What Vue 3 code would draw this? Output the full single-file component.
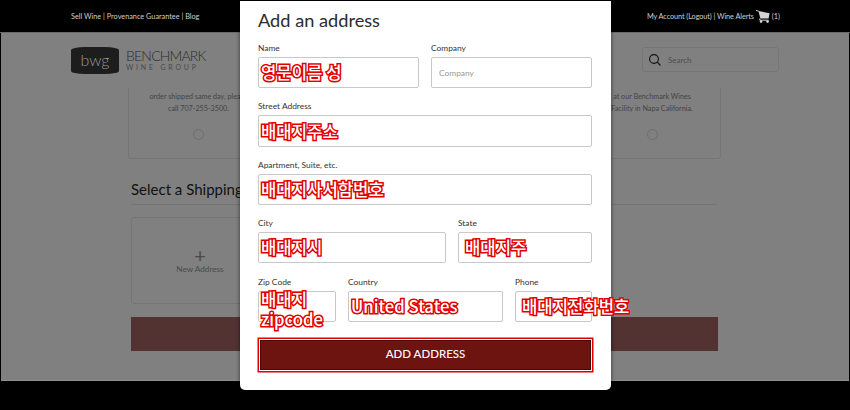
<template>
  <div class="page">
    <header class="topbar">
      <div class="top-left">Sell Wine | Provenance Guarantee | Blog</div>
      <div class="top-right">
        <span class="account">My Account (Logout) | Wine Alerts</span>
        <svg class="cart" width="14" height="13" viewBox="0 0 14 13">
          <path d="M0 .5l2.6.6" stroke="#d4d4d4" fill="none" />
          <path d="M2.4 1L13.6 3.2 12.6 8.6H4.4Z" fill="#d4d4d4" />
          <path d="M3.8 8.6v1.6h8.8" stroke="#d4d4d4" fill="none" />
          <circle cx="5" cy="11.6" r="1.3" fill="#d4d4d4" />
          <circle cx="11.6" cy="11.6" r="1.3" fill="#d4d4d4" />
        </svg>
        <span>(1)</span>
      </div>
    </header>

    <main class="backdrop">
      <div class="brand-row">
        <div class="logo">
          <div class="badge">bwg</div>
          <div class="wordmark">
            <div class="bench">BENCHMARK</div>
            <div class="wine">WINE GROUP</div>
          </div>
        </div>
        <div class="search">
          <svg width="12" height="12" viewBox="0 0 12 12" fill="none" stroke="#111" stroke-width="1.1">
            <circle cx="5" cy="5" r="4.4" />
            <path d="M8.2 8.2l3.3 3.3" />
          </svg>
          <span>Search</span>
        </div>
      </div>

      <section class="pickup-row">
        <div class="pickup left">
          <p>order shipped same day, please</p>
          <p>call 707-255-3500.</p>
          <i class="radio"></i>
        </div>
        <div class="pickup right">
          <p>at our Benchmark Wines</p>
          <p>Facility in Napa California.</p>
          <i class="radio"></i>
        </div>
      </section>

      <h2 class="ship-title">Select a Shipping Address</h2>
      <div class="new-card">
        <div class="plus">+</div>
        <div class="new-label">New Address</div>
      </div>
      <div class="continue"></div>
    </main>
    <div class="bottom"></div>

    <form class="modal" @submit.prevent>
      <h1>Add an address</h1>
      <div v-for="(row, i) in rows" :key="i" class="row" :style="{ gridTemplateColumns: row.cols }">
        <div v-for="field in row.fields" :key="field.label" class="field">
          <label>{{ field.label }}</label>
          <div class="box" :class="{ tall: row.tall }">
            <span v-if="field.value" class="marked" :class="field.cls">{{ field.value }}</span>
            <span v-else class="placeholder">{{ field.label }}</span>
          </div>
        </div>
      </div>
      <button class="submit" type="submit">ADD ADDRESS</button>
    </form>
  </div>
</template>

<script setup>
const rows = [
  {
    cols: '161px 161px',
    fields: [
      { label: 'Name', value: '영문이름 성' },
      { label: 'Company', value: '' }
    ]
  },
  { cols: '334px', tall: true, fields: [{ label: 'Street Address', value: '배대지주소' }] },
  { cols: '334px', fields: [{ label: 'Apartment, Suite, etc.', value: '배대지사서함번호' }] },
  {
    cols: '188px 134px',
    fields: [
      { label: 'City', value: '배대지시' },
      { label: 'State', value: '배대지주', cls: 'inset' }
    ]
  },
  {
    cols: '78px 155px 77px',
    fields: [
      { label: 'Zip Code', value: '배대지 zipcode', cls: 'wrap' },
      { label: 'Country', value: 'United States' },
      { label: 'Phone', value: '배대지전화번호', cls: 'over' }
    ]
  }
]
</script>

<style>
html,
body {
  margin: 0;
  background: #000;
}
</style>

<style scoped>
.page {
  position: relative;
  width: 850px;
  height: 410px;
  overflow: hidden;
  background: #000;
  font-family: Lato, "Noto Sans CJK KR", sans-serif;
}
.topbar {
  height: 33px;
  box-sizing: border-box;
  display: flex;
  justify-content: space-between;
  align-items: center;
  padding: 0 70px 0 71px;
  color: #cfcfcf;
  font-size: 7.3px;
  border-bottom: 1px solid #6a6a6a;
}
.top-right {
  display: flex;
  align-items: center;
  gap: 2px;
}
.account {
  letter-spacing: -0.08px;
}
.backdrop {
  height: 348px;
  margin: 0 1px;
  background: #808080;
  box-sizing: border-box;
  padding-top: 14px;
  border-bottom: 1px solid #8e8e8e;
}
.bottom {
  height: 29px;
}
.brand-row {
  display: flex;
  justify-content: space-between;
  padding: 0 70px;
  height: 41px;
}
.logo {
  display: flex;
  align-items: center;
  gap: 7px;
  height: 27px;
}
.badge {
  width: 48px;
  height: 27px;
  border-radius: 14px / 3px;
  background: #1d1d1d;
  color: #9a9a9a;
  font-size: 16px;
  font-weight: 300;
  text-align: center;
  line-height: 25px;
}
.bench {
  color: #2c2c2c;
  font-size: 14px;
  font-weight: 300;
  letter-spacing: -0.8px;
  line-height: 14px;
}
.wine {
  color: #4a4a4a;
  font-size: 7px;
  line-height: 9px;
  letter-spacing: 2.8px;
  white-space: nowrap;
}
.search {
  width: 137px;
  height: 25px;
  box-sizing: border-box;
  display: flex;
  align-items: center;
  gap: 7px;
  padding-left: 6px;
  border: 1px solid #767676;
  border-radius: 3px;
  color: #4d4d4d;
  font-size: 8px;
}
.pickup-row {
  display: flex;
  justify-content: space-between;
  margin: 0 128px 0 127px;
  height: 71px;
  box-sizing: border-box;
  border: 1px solid #757575;
  border-top: 0;
  border-radius: 0 0 3px 3px;
  color: #444;
  font-size: 7.2px;
  line-height: 12px;
}
.pickup {
  width: 139px;
  text-align: center;
  padding-top: 3px;
}
.pickup.right {
  width: 136px;
}
.pickup p {
  margin: 0;
  white-space: nowrap;
}
.radio {
  display: block;
  width: 9px;
  height: 9px;
  margin: 14px auto 0;
  border: 1px solid #6e6e6e;
  border-radius: 50%;
}
.ship-title {
  margin: 23px 0 0 130px;
  width: 586px;
  height: 23px;
  box-sizing: border-box;
  border-bottom: 1px solid #757575;
  color: #111;
  font-size: 15px;
  font-weight: 400;
  line-height: 15px;
}
.new-card {
  width: 138px;
  height: 87px;
  box-sizing: border-box;
  margin: 12px 0 0 130px;
  padding-top: 30px;
  border: 1px solid #757575;
  border-radius: 3px;
  color: #4a4a4a;
  text-align: center;
}
.plus {
  font-size: 20px;
  line-height: 14px;
}
.new-label {
  font-size: 8.2px;
  line-height: 15px;
}
.continue {
  width: 587px;
  height: 34px;
  margin: 13px 0 0 130px;
  background: #523332;
}
.modal {
  position: absolute;
  left: 240px;
  top: 1px;
  width: 371px;
  height: 389px;
  box-sizing: border-box;
  padding: 0 18px;
  background: #fff;
  border-radius: 0 0 5px 5px;
  box-shadow: 0 0 4px rgba(0, 0, 0, 0.6);
}
h1 {
  margin: 0;
  height: 42px;
  color: #2b2b2b;
  font-size: 18.2px;
  font-weight: 400;
  line-height: 38px;
}
.row {
  display: grid;
  justify-content: space-between;
  width: 334px;
  margin-bottom: 13px;
}
.row:nth-of-type(4) {
  margin-bottom: 14px;
}
label {
  display: block;
  height: 14px;
  color: #333;
  font-size: 8.4px;
  line-height: 10px;
}
.box {
  position: relative;
  height: 31px;
  box-sizing: border-box;
  display: flex;
  align-items: center;
  padding-left: 2px;
  border: 1px solid #c8c8c8;
  border-radius: 2px;
}
.box.tall {
  height: 32px;
}
.placeholder {
  padding-left: 5px;
  color: #999;
  font-size: 8.4px;
}
.marked {
  margin-top: -1px;
  color: #fff;
  font-family: "Noto Sans CJK KR", "Noto Sans", sans-serif;
  font-size: 16.7px;
  font-weight: 500;
  line-height: 20px;
  white-space: nowrap;
  -webkit-text-stroke: 3px #e00000;
  paint-order: stroke fill;
}
.marked.inset,
.marked.over {
  padding-left: 4px;
}
.marked.wrap {
  position: absolute;
  left: 2px;
  top: -3px;
  margin-top: 0;
  width: 70px;
  white-space: normal;
}
.submit {
  display: block;
  width: 331px;
  height: 30px;
  margin: 18px 0 0 2px;
  padding: 0 0 4px;
  box-sizing: border-box;
  background: #6e1410;
  border: 1px solid #3d0b08;
  box-shadow: 0 0 0 1px #fff, 0 0 0 2.5px #e00000;
  color: #fff;
  font-family: Lato, sans-serif;
  font-size: 11.5px;
  font-weight: 500;
}
</style>
